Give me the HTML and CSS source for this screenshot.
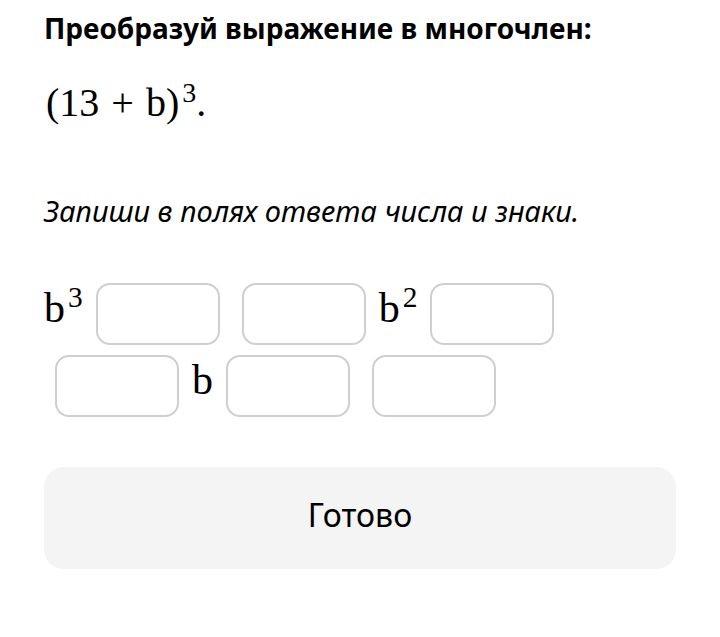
FILE: index.html
```html
<!DOCTYPE html>
<html>
<head>
<meta charset="utf-8">
<link rel="stylesheet" href="styles.css">
</head>
<body>
<div class="page">
  <h1 class="title">Преобразуй выражение в многочлен:</h1>
  <div class="expr math">(13<span class="op">+</span>b)<sup class="sup">3</sup>.</div>
  <p class="hint">Запиши в полях ответа числа и знаки.</p>
  <div class="answer">
    <div class="row">
      <span class="math term">b<sup class="sup">3</sup></span>
      <span class="box"></span>
      <span class="box wide-gap"></span>
      <span class="math term">b<sup class="sup">2</sup></span>
      <span class="box"></span>
    </div>
    <div class="row row2">
      <span class="box"></span>
      <span class="math term">b</span>
      <span class="box"></span>
      <span class="box wide-gap"></span>
    </div>
  </div>
  <button class="done">Готово</button>
</div>
</body>
</html>
```
FILE: styles.css
```css
html, body {
  margin: 0;
  padding: 0;
  background: #fff;
  color: #000;
}
.page {
  padding: 10px 44px 0 44px;
  font-family: "Noto Sans", "Open Sans", sans-serif;
}
.title {
  margin: 0;
  font-size: 28px;
  font-weight: 700;
  line-height: 36px;
}
.math {
  font-family: "Liberation Serif", "DejaVu Serif", serif;
}
.expr {
  margin-top: 35px;
  font-size: 40px;
  line-height: 44px;
  padding-left: 2px;
}
.op {
  margin: 0 12px;
}
.sup {
  font-size: 0.7em;
  vertical-align: 0.5em;
  line-height: 0;
  margin-left: 3px;
}
.hint {
  margin: 68px 0 0 0;
  font-size: 29px;
  font-style: italic;
  line-height: 36px;
}
.answer {
  margin-top: 54px;
  display: flex;
  flex-direction: column;
  gap: 10px;
}
.row {
  display: flex;
  align-items: flex-start;
  height: 62px;
}
.row2 {
  padding-left: 11px;
}
.term {
  font-size: 42px;
  line-height: 44px;
  margin-top: 3px;
  margin-right: 13px;
}
.box {
  box-sizing: border-box;
  width: 124px;
  height: 62px;
  border: 2px solid #cfcfcf;
  border-radius: 14px;
  margin-right: 13px;
}
.wide-gap {
  margin-left: 9px;
}
.done {
  display: block;
  margin-top: 50px;
  width: 632px;
  height: 102px;
  border: none;
  border-radius: 20px;
  background: #f4f4f4;
  font-family: "Noto Sans", "Open Sans", sans-serif;
  font-size: 32px;
  color: #000;
  padding: 0 0 8px 0;
}
```
